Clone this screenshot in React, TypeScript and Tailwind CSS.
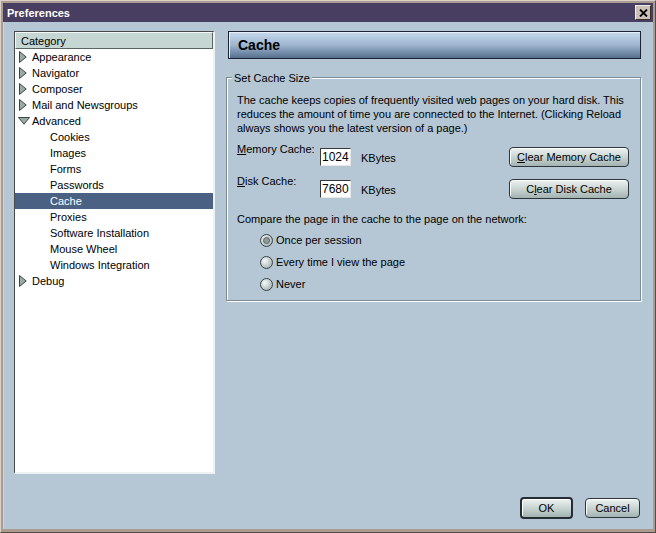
import React from 'react'

const FONT = "font-['Liberation_Sans',Arial,sans-serif]"

const Twisty = ({ open }: { open?: boolean }) =>
  open ? (
    <svg width="12" height="8" viewBox="0 0 12 8">
      <polygon points="0.5,0.5 11.5,0.5 6,7.2" fill="#9aaaa6" stroke="#3e4644" strokeWidth="1" />
    </svg>
  ) : (
    <svg width="8" height="12" viewBox="0 0 8 12">
      <polygon points="0.5,0.5 7.2,6 0.5,11.5" fill="#9aaaa6" stroke="#3e4644" strokeWidth="1" />
    </svg>
  )

type Item = { label: string; level: 0 | 1; twisty?: 'open' | 'closed'; selected?: boolean }

const ITEMS: Item[] = [
  { label: 'Appearance', level: 0, twisty: 'closed' },
  { label: 'Navigator', level: 0, twisty: 'closed' },
  { label: 'Composer', level: 0, twisty: 'closed' },
  { label: 'Mail and Newsgroups', level: 0, twisty: 'closed' },
  { label: 'Advanced', level: 0, twisty: 'open' },
  { label: 'Cookies', level: 1 },
  { label: 'Images', level: 1 },
  { label: 'Forms', level: 1 },
  { label: 'Passwords', level: 1 },
  { label: 'Cache', level: 1, selected: true },
  { label: 'Proxies', level: 1 },
  { label: 'Software Installation', level: 1 },
  { label: 'Mouse Wheel', level: 1 },
  { label: 'Windows Integration', level: 1 },
  { label: 'Debug', level: 0, twisty: 'closed' },
]

const Button = ({ children, wide, isDefault }: { children: React.ReactNode; wide?: string; isDefault?: boolean }) => (
  <div
    className={`${wide} h-[20px] flex items-center justify-center rounded-[4px] bg-gradient-to-b from-[#eef3f2] via-[#c9d5d3] to-[#a3b3b1] text-[11px] text-black shadow-[inset_1px_1px_0_#ffffff] ${
      isDefault ? 'border-2 border-[#262c34]' : 'border border-[#2e363c]'
    }`}
  >
    {children}
  </div>
)

const Radio = ({ label, checked }: { label: string; checked?: boolean }) => (
  <div className="h-[22px] flex items-center pl-[23px]">
    <span className="w-[13px] h-[13px] rounded-full border border-[#3a4248] bg-[radial-gradient(circle_at_35%_35%,#f6f9f9,#94a4a2)] flex items-center justify-center">
      {checked && <span className="w-[7px] h-[7px] rounded-full border border-[#56625f] bg-[#8c9a98]" />}
    </span>
    <span className="ml-[3px]">{label}</span>
  </div>
)

export default function App() {
  return (
    <div className={`${FONT} w-[656px] h-[533px] bg-[#ab9b90] border border-t-[#ddd2ca] border-l-[#ddd2ca] border-r-[#5a4a40] border-b-[#5a4a40] p-[2px] pb-[3px] flex flex-col text-[11px] leading-[14px] text-black`}>
      {/* title bar */}
      <div className="h-[19px] bg-[#473e61] flex items-center justify-between pl-[4px] pr-[2px]">
        <span className="text-white font-bold text-[11px]">Preferences</span>
        <div className="w-[16px] h-[15px] bg-[#cbc1b9] border border-t-[#f2ece6] border-l-[#f2ece6] border-r-[#3a302a] border-b-[#3a302a] flex items-center justify-center">
          <svg width="9" height="8" viewBox="0 0 9 8">
            <path d="M1 0.5 L8 7.5 M8 0.5 L1 7.5" stroke="#000" strokeWidth="1.8" />
          </svg>
        </div>
      </div>

      {/* body */}
      <div className="flex-1 bg-[#b5c6d4] border-l border-[#ddd2ca] flex flex-col pl-[10px] pr-[11px] pt-[9px] pb-[10px]">
        <div className="flex gap-[11px]">
          {/* tree */}
          <div className="shrink-0 w-[201px] h-[443px] bg-white border-l border-t border-[#4a4a4a] border-r-2 border-r-[#eef2f4] border-b-2 border-b-[#eef2f4] flex flex-col">
            <div className="h-[17px] bg-[#c5d6d3] border border-t-[#f4f8f8] border-l-[#f4f8f8] border-r-[#5a6462] border-b-[#5a6462] flex items-center pl-[5px]">
              Category
            </div>
            {ITEMS.map((it) => (
              <div
                key={it.label}
                className={`h-[16px] flex items-center ${it.selected ? 'bg-[#4b6184] text-white' : ''} ${
                  it.level === 1 ? 'pl-[35px]' : 'pl-[4px]'
                }`}
              >
                {it.twisty && (
                  <span className={`w-[13px] flex items-center ${it.twisty === 'open' ? '-ml-[1px] mr-[1px]' : ''}`}>
                    <Twisty open={it.twisty === 'open'} />
                  </span>
                )}
                <span>{it.label}</span>
              </div>
            ))}
          </div>

          {/* right pane */}
          <div className="shrink-0 w-[415px] flex flex-col">
            <div className="ml-[2px] h-[28px] border border-[#1d2232] bg-gradient-to-b from-[#c6d9ed] via-[#9fb6d0] to-[#56708f] shadow-[inset_1px_1px_0_#e6f0fa] flex items-center pl-[9px]">
              <span className="font-bold text-[14px]">Cache</span>
            </div>

            <div className="relative mt-[18px] h-[224px] border border-[#7d8b97] shadow-[inset_1px_1px_0_#ffffff,1px_1px_0_#ffffff] pl-[10px] pt-[15px]">
              <span className="absolute -top-[7px] left-[5px] px-[2px] bg-[#b5c6d4]">Set Cache Size</span>

              <p>
                The cache keeps copies of frequently visited web pages on your hard disk. This
                <br />
                reduces the amount of time you are connected to the Internet. (Clicking Reload
                <br />
                always shows you the latest version of a page.)
              </p>

              <div className="mt-[7px] flex flex-col">
                {[
                  { pre: 'M', rest: 'emory Cache:', value: '1024', btn: <><u>C</u>lear Memory Cache</> },
                  { pre: 'D', rest: 'isk Cache:', value: '7680', btn: <>C<u>l</u>ear Disk Cache</> },
                ].map((r) => (
                  <div key={r.value} className="h-[32px] flex items-start">
                    <span className="w-[83px]">
                      <u>{r.pre}</u>
                      {r.rest}
                    </span>
                    <span className="mt-[6px] w-[31px] h-[18px] bg-white border border-t-[#3a3a3a] border-l-[#3a3a3a] border-r-[#e8e8e8] border-b-[#e8e8e8] flex items-center pl-[1px] text-[12px]">
                      {r.value}
                    </span>
                    <span className="ml-[10px] mt-[9px]">KBytes</span>
                    <div className="ml-auto mr-[11px] mt-[5px]">
                      <Button wide="w-[120px]">{r.btn}</Button>
                    </div>
                  </div>
                ))}
              </div>

              <p className="mt-[6px]">Compare the page in the cache to the page on the network:</p>
              <div className="mt-[3px] flex flex-col">
                <Radio label="Once per session" checked />
                <Radio label="Every time I view the page" />
                <Radio label="Never" />
              </div>
            </div>
          </div>
        </div>

        <div className="mt-auto mr-[2px] flex justify-end gap-[12px]">
          <Button wide="w-[53px] h-[22px]" isDefault>
            OK
          </Button>
          <div className="mt-[1px]">
            <Button wide="w-[55px]">Cancel</Button>
          </div>
        </div>
      </div>
    </div>
  )
}
